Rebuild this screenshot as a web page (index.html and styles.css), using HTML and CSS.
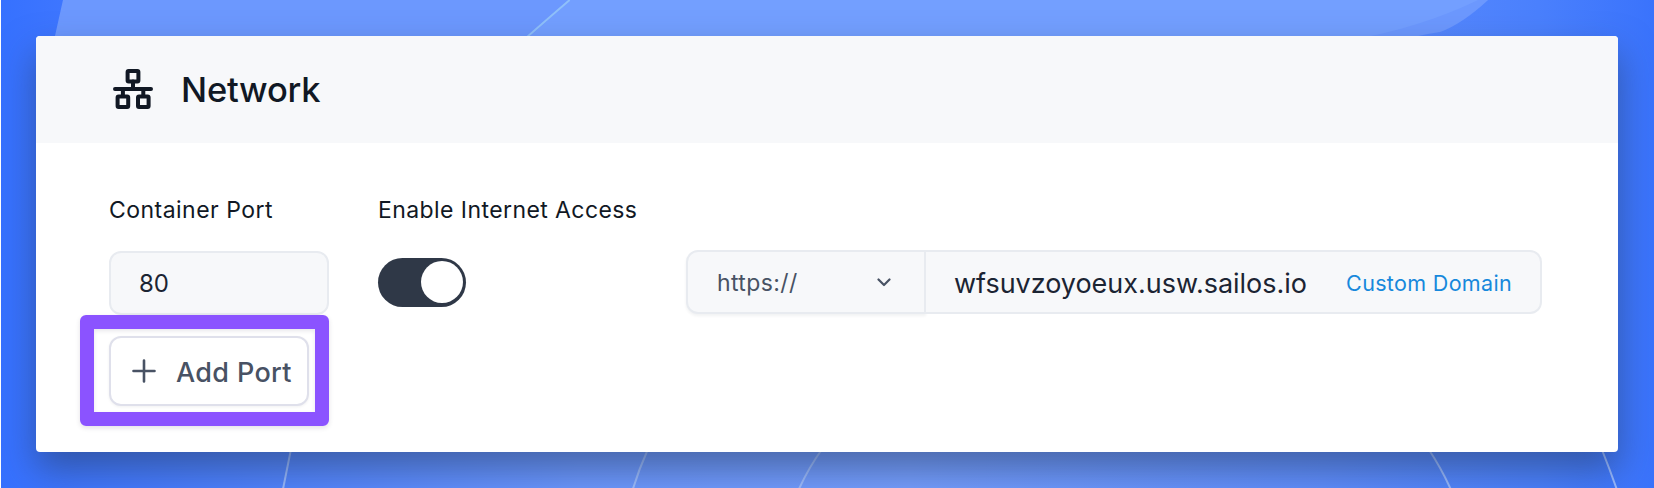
FILE: index.html
```
<!DOCTYPE html>
<html lang="en">
<head>
<meta charset="utf-8">
<title>Network</title>
<link rel="stylesheet" href="styles.css">
</head>
<body>
<svg class="backdrop" viewBox="0 0 1654 488" preserveAspectRatio="none" aria-hidden="true">
  <defs>
    <linearGradient id="base" x1="0" x2="1" y1="0" y2="0">
      <stop offset="0" stop-color="#3671ff"/>
      <stop offset=".04" stop-color="#3e76ff"/>
      <stop offset=".35" stop-color="#6c98ff"/>
      <stop offset=".55" stop-color="#769fff"/>
      <stop offset=".8" stop-color="#5f8efe"/>
      <stop offset=".93" stop-color="#4a80fd"/>
      <stop offset="1" stop-color="#3a73fc"/>
    </linearGradient>
  </defs>
  <rect width="1654" height="488" fill="url(#base)"/>
  <path d="M62 0L52 45H1390Q1410 36 1440 32Q1462 24 1488 0Z" fill="#6c98fe"/>
  <path d="M570 0L525 40H1350Q1420 28 1478 0Z" fill="#739fff"/>
  <path d="M569 0Q548 18 523 40" stroke="#8fc0fa" stroke-width="2" fill="none"/>
  <g class="arc">
    <path d="M290 450Q286 470 282 490"/>
    <path d="M647 450Q638 470 632 490"/>
    <path d="M821 450Q808 468 798 490"/>
    <path d="M1429 450Q1441 468 1451 490"/>
    <path d="M1602 450Q1610 470 1617 490"/>
  </g>
</svg>
<main class="card">
  <header class="card-header">
    <svg class="network-icon" viewBox="0 0 40 40" aria-hidden="true">
      <rect x="14.6" y="2" width="10.8" height="10.4" rx="1"/>
      <rect x="4.6" y="27.4" width="10.6" height="10.6" rx="1"/>
      <rect x="25" y="27.4" width="10.6" height="10.6" rx="1"/>
      <path d="M20 12.6V20M2 20H38M9.9 20V27M30.3 20V27"/>
    </svg>
    <h1 class="title">Network</h1>
  </header>
  <section class="ports">
    <div class="column column-port">
      <label class="label" for="port">Container Port</label>
      <input class="port-input" id="port" value="80">
      <button class="add-button">
        <svg class="plus" viewBox="0 0 24 24" aria-hidden="true"><path d="M12 1.5V22.5M1.5 12H22.5"/></svg>
        <span class="add-text">Add Port</span>
      </button>
    </div>
    <div class="column column-access">
      <span class="label label-access">Enable Internet Access</span>
      <div class="toggle"><span class="knob"></span></div>
    </div>
    <div class="domain">
      <div class="protocol">
        <span class="protocol-text">https://</span>
        <svg class="chevron" viewBox="0 0 14 9" aria-hidden="true"><path d="M1.5 1.5L7 7L12.5 1.5"/></svg>
      </div>
      <div class="host">
        <span class="host-text">wfsuvzoyoeux.usw.sailos.io</span>
        <a class="custom">Custom Domain</a>
      </div>
    </div>
  </section>
  <div class="highlight"></div>
</main>
</body>
</html>
```
FILE: styles.css
```
* { box-sizing: border-box; }
body {
  margin: 0;
  height: 488px;
  overflow: hidden;
  padding: 36px;
  font-family: Inter, "Liberation Sans", sans-serif;
  color: #111824;
}
.backdrop {
  position: absolute;
  inset: 0;
  width: 1654px;
  height: 488px;
  border-left: 1px solid #fff;
}
.arc { fill: none; stroke: #a9c5ff; stroke-opacity: .85; stroke-width: 2; }
.card {
  position: relative;
  height: 416px;
  border-radius: 4px;
  background: #fff;
  box-shadow: 0 18px 36px rgba(36, 56, 90, .52);
}
.card-header {
  display: flex;
  align-items: center;
  height: 107px;
  padding: 0 77px;
  gap: 28px;
  border-radius: 4px 4px 0 0;
  background: #f7f8fa;
}
.network-icon {
  width: 40px;
  height: 40px;
  margin-top: -2px;
  fill: none;
  stroke: #111824;
  stroke-width: 4;
  stroke-linecap: round;
  stroke-linejoin: round;
}
.title { margin: 0; font-size: 34.5px; line-height: 48px; font-weight: 500; letter-spacing: -.2px; }
.ports { display: flex; padding: 52px 76px 0 73px; }
.column { display: flex; flex-direction: column; align-items: flex-start; }
.column-port { width: 269px; }
.column-access { width: 308px; }
.label { font-size: 23px; line-height: 30px; letter-spacing: .47px; white-space: nowrap; }
.label-access { letter-spacing: .42px; }
.port-input {
  width: 220px;
  height: 64px;
  margin: 26px 0 21px;
  padding: 0 28px;
  border: 2px solid #e8ebf0;
  border-radius: 12px;
  background: #f7f8fa;
  font: 24px Inter, "Liberation Sans", sans-serif;
  color: #1b2433;
}
.add-button {
  display: flex;
  align-items: center;
  width: 200px;
  height: 70px;
  padding: 0 0 0 21px;
  gap: 20px;
  border: 2px solid #dfe0eb;
  border-radius: 12px;
  background: #fff;
  box-shadow: 0 1px 3px rgba(20, 20, 40, .06);
  color: #485264;
}
.plus { width: 24px; height: 24px; fill: none; stroke: #485264; stroke-width: 2.6; stroke-linecap: round; }
.add-text { padding-top: 3px; font: 500 27px/36px Inter, "Liberation Sans", sans-serif; letter-spacing: .35px; white-space: nowrap; }
.toggle {
  display: flex;
  justify-content: flex-end;
  width: 88px;
  height: 49px;
  margin-top: 33px;
  padding: 3px;
  border-radius: 25px;
  background: #2f3847;
}
.knob { width: 42px; height: 42px; border-radius: 50%; background: #fff; }
.domain { display: flex; width: 856px; height: 64px; margin-top: 55px; }
.protocol {
  display: flex;
  align-items: center;
  justify-content: space-between;
  width: 240px;
  padding: 0 33px 0 29px;
  border: 2px solid #e8ebf0;
  border-radius: 12px 0 0 12px;
  background: #f7f8fa;
  box-shadow: 0 2px 3px rgba(20, 30, 50, .06);
  color: #485264;
}
.protocol-text { padding-top: 2px; font-size: 23px; letter-spacing: .4px; }
.chevron { width: 14px; height: 9px; fill: none; stroke: #485264; stroke-width: 2.2; stroke-linecap: round; stroke-linejoin: round; }
.host {
  display: flex;
  flex: 1;
  align-items: center;
  justify-content: space-between;
  padding: 0 28px;
  border: 2px solid #e8ebf0;
  border-left: 0;
  border-radius: 0 12px 12px 0;
  background: #f7f8fa;
}
.host-text { padding-top: 2px; font-size: 27px; letter-spacing: -.03px; color: #1b2433; }
.custom { padding-top: 2px; font-size: 21.5px; letter-spacing: .33px; color: #1688dc; }
.highlight {
  position: absolute;
  left: 44px;
  top: 279px;
  width: 249px;
  height: 111px;
  border: 14px solid #8b53ff;
  border-radius: 6px;
  box-shadow: 0 2px 5px rgba(30, 20, 60, .12), inset 0 2px 4px rgba(30, 20, 60, .1);
}
```
